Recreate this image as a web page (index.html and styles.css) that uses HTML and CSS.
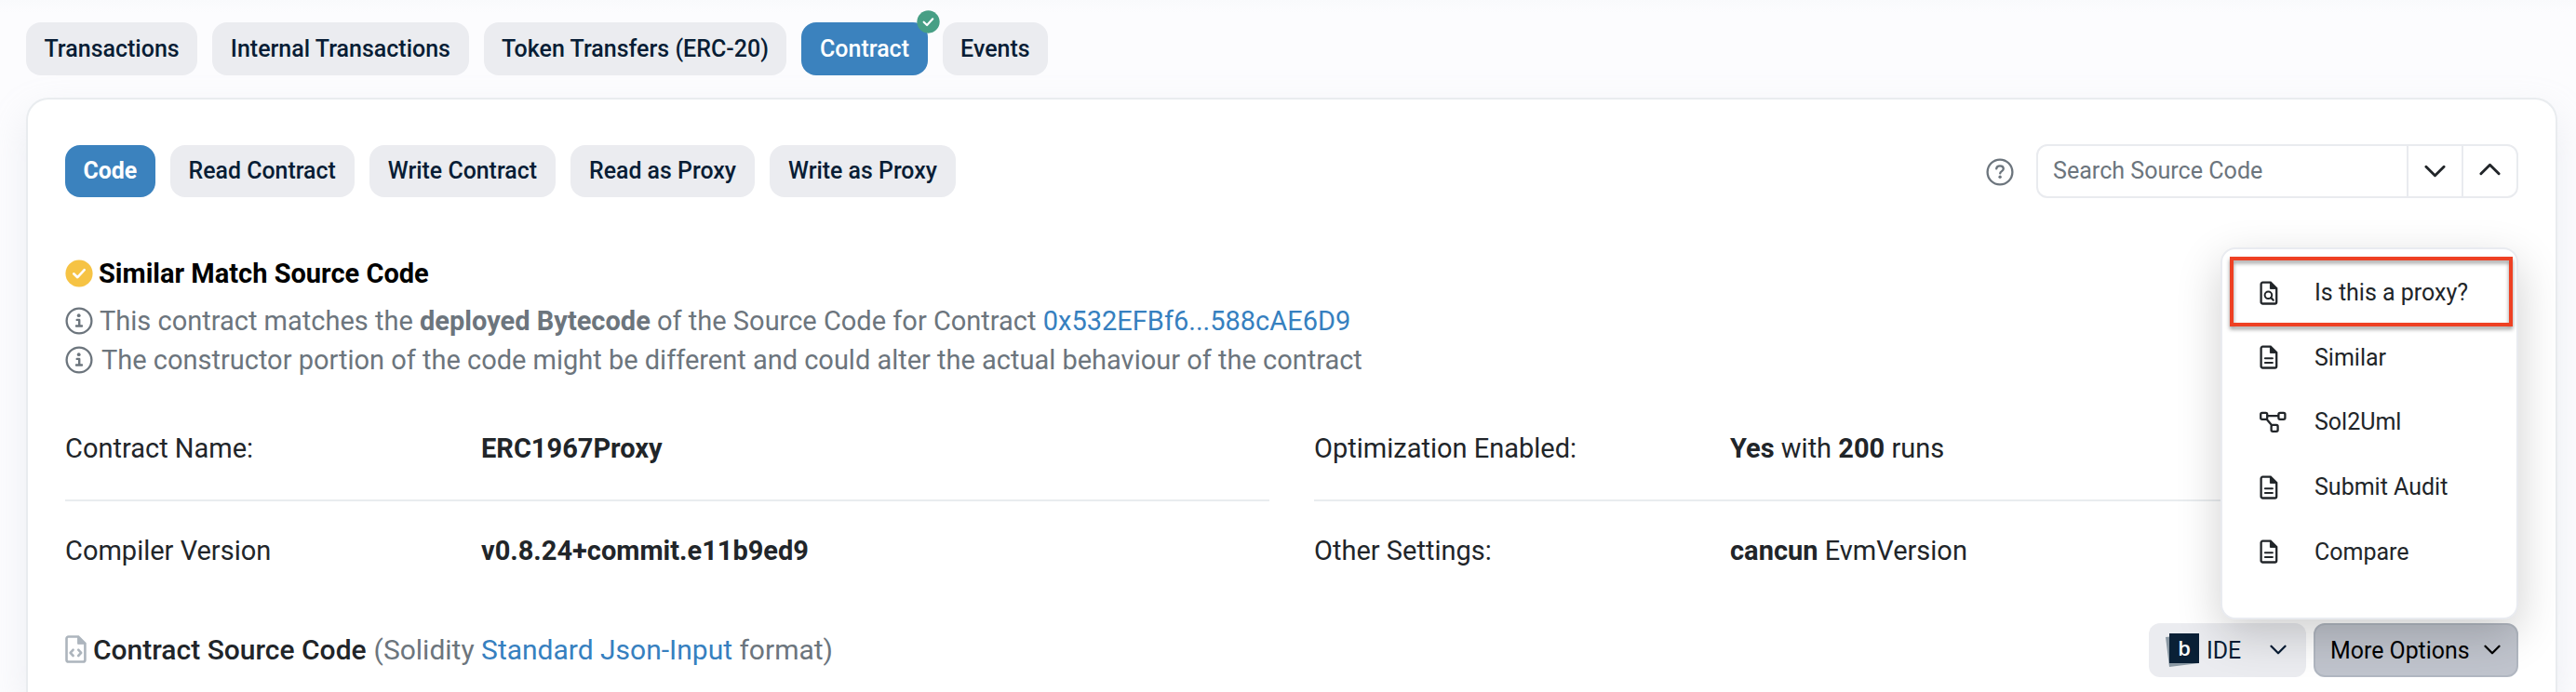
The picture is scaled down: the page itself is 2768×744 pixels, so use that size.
FILE: index.html
```html
<!DOCTYPE html>
<html lang="en">
<head>
<meta charset="utf-8">
<title>Contract</title>
<link rel="stylesheet" href="styles.css">
</head>
<body>
<svg class="defs" width="0" height="0">
  <symbol id="check" viewBox="0 0 30 30"><circle cx="15" cy="15" r="14.6" fill="currentColor"/><path d="M9.2 15.3l4.1 3.9 7.4-8" fill="none" stroke="#fff" stroke-width="2.6" stroke-linecap="round" stroke-linejoin="round"/></symbol>
  <symbol id="info" viewBox="0 0 30 30"><circle cx="15" cy="15" r="13.4" fill="none" stroke="currentColor" stroke-width="2.3"/><circle cx="14.7" cy="9.2" r="1.9" fill="currentColor"/><path d="M12.7 13.9h2.5v6.4M12 20.5h6" fill="none" stroke="currentColor" stroke-width="2.4" stroke-linecap="round" stroke-linejoin="round"/></symbol>
  <symbol id="down" viewBox="0 0 24 14"><path d="M2 2l10 10L22 2" fill="none" stroke="currentColor" stroke-width="3" stroke-linecap="round" stroke-linejoin="round"/></symbol>
  <symbol id="file" viewBox="0 0 20 26"><path d="M3.4 1.7h8.4l6.4 6.4v14.6a1.8 1.8 0 0 1-1.8 1.8H3.4a1.8 1.8 0 0 1-1.8-1.8V3.5a1.8 1.8 0 0 1 1.8-1.8z" fill="none" stroke="currentColor" stroke-width="2.3"/><path d="M11.4 1.5v6.9h6.9z" fill="currentColor" stroke="currentColor" stroke-linejoin="round"/></symbol>
</svg>

<nav class="tabs">
  <a class="tab">Transactions</a>
  <a class="tab">Internal Transactions</a>
  <a class="tab">Token Transfers (ERC-20)</a>
  <a class="tab active">Contract<svg class="badge"><use href="#check"/></svg></a>
  <a class="tab">Events</a>
</nav>

<main class="card">
  <div class="toolbar">
    <div class="subtabs">
      <a class="tab active">Code</a>
      <a class="tab">Read Contract</a>
      <a class="tab">Write Contract</a>
      <a class="tab">Read as Proxy</a>
      <a class="tab">Write as Proxy</a>
    </div>
    <div class="search-area">
      <svg class="help" viewBox="0 0 30 30" fill="none" stroke="currentColor" stroke-linecap="round" stroke-linejoin="round"><circle cx="15" cy="15" r="13.4" stroke-width="2.3"/><path d="M11.2 11.3c.2-1.8 1.5-2.9 3.8-2.9 2.2 0 3.8 1.2 3.8 3.1 0 2.4-3.6 2.7-3.6 4.9" stroke-width="2.3"/><circle cx="15.1" cy="20.3" r="1.7" fill="currentColor" stroke="none"/></svg>
      <div class="search">
        <span class="field">Search Source Code</span>
        <span class="step"><svg><use href="#down"/></svg></span>
        <span class="step up"><svg><use href="#down"/></svg></span>
      </div>
    </div>
  </div>

  <section class="match">
    <h2><svg class="mark yellow"><use href="#check"/></svg>Similar Match Source Code</h2>
    <p><svg class="mark"><use href="#info"/></svg><span>This contract matches the <b>deployed Bytecode</b> of the Source Code for Contract <a>0x532EFBf6...588cAE6D9</a></span></p>
    <p class="second"><svg class="mark"><use href="#info"/></svg><span>The constructor portion of the code might be different and could alter the actual behaviour of the contract</span></p>
  </section>

  <section class="details">
    <div class="row ruled"><span class="label">Contract Name:</span><span><b>ERC1967Proxy</b></span></div>
    <div class="row ruled"><span class="label">Optimization Enabled:</span><span><b>Yes</b> with <b>200</b> runs</span></div>
    <div class="row"><span class="label">Compiler Version</span><span><b>v0.8.24+commit.e11b9ed9</b></span></div>
    <div class="row"><span class="label">Other Settings:</span><span><b>cancun</b> EvmVersion</span></div>
  </section>

  <section class="source">
    <div class="source-title">
      <svg class="code-file" viewBox="0 0 23 30"><path d="M3.6 1.5h10.6l7.2 7.2v17.7a2.1 2.1 0 0 1-2.1 2.1H3.6a2.1 2.1 0 0 1-2.1-2.1V3.6a2.1 2.1 0 0 1 2.1-2.1z" fill="none" stroke="currentColor" stroke-width="2.6"/><path d="M13.6 1.3v8h8z" fill="currentColor" stroke="currentColor" stroke-linejoin="round"/><path d="M8.6 15.6l-3 3.2 3 3.2M14.2 15.6l3 3.2-3 3.2" fill="none" stroke="currentColor" stroke-width="2.6" stroke-linecap="round" stroke-linejoin="round"/></svg>
      <span class="name">Contract Source Code</span>
      <span class="format">(Solidity <a>Standard Json-Input</a> format)</span>
    </div>
    <div class="actions">
      <div class="btn ide">
        <span class="logo"><span class="logo-face">b</span></span>
        <span class="ide-text">IDE</span>
        <svg class="chev"><use href="#down"/></svg>
      </div>
      <div class="more">
        <div class="btn dark">More Options<svg class="chev"><use href="#down"/></svg></div>
        <div class="menu">
          <div class="item highlight"><svg class="ic" viewBox="0 0 20 26"><use href="#file"/><circle cx="9.4" cy="15.3" r="3.8" fill="none" stroke="currentColor" stroke-width="2"/><path d="M12.2 18l2.6 2.7" stroke="currentColor" stroke-width="2.2" stroke-linecap="round"/></svg>Is this a proxy?</div>
          <div class="item"><svg class="ic" viewBox="0 0 20 26"><use href="#file"/><path d="M5.9 14.3h8M5.9 19.1h8" stroke="currentColor" stroke-width="2" stroke-linecap="round"/></svg>Similar</div>
          <div class="item"><svg class="ic wide" viewBox="0 0 29 24" fill="none" stroke="currentColor" stroke-width="2.3"><rect x="1.2" y="1.8" width="7" height="7" rx="1.6"/><rect x="20.4" y="1.8" width="7" height="7" rx="1.6"/><rect x="12.6" y="14.8" width="7" height="7" rx="1.6"/><path d="M8.2 5.2h12.2M7.4 8.6l6 7"/></svg>Sol2Uml</div>
          <div class="item"><svg class="ic" viewBox="0 0 20 26"><use href="#file"/><path d="M5.9 14.3h8M5.9 19.1h8" stroke="currentColor" stroke-width="2" stroke-linecap="round"/></svg>Submit Audit</div>
          <div class="item"><svg class="ic" viewBox="0 0 20 26"><use href="#file"/><path d="M5.9 14.3h8M5.9 19.1h8" stroke="currentColor" stroke-width="2" stroke-linecap="round"/></svg>Compare</div>
        </div>
      </div>
    </div>
  </section>
</main>
</body>
</html>
```
FILE: styles.css
```css
* { box-sizing: border-box; }
html, body { height: 744px; overflow: hidden; }
body {
  margin: 0;
  padding: 24px 20px 0 28px;
  background: linear-gradient(#f9fafc 0, #fcfcfe 14px, #fcfcfe 100%);
  color: #212529;
  font-family: Roboto, "Liberation Sans", sans-serif;
  font-size: 29px;
}
svg { display: block; flex: none; }
.defs { position: absolute; }
b { font-weight: 700; }
a { color: #3680bf; }

.tabs, .subtabs { display: flex; gap: 16px; }
.tab {
  position: relative;
  height: 57px;
  padding: 0 19.6px 0 19.5px;
  border-radius: 16px;
  background: #ebecf0;
  color: #081d35;
  font-size: 25px;
  font-weight: 500;
  line-height: 57px;
  white-space: nowrap;
}
.subtabs .tab { height: 56px; padding: 0 20px; font-size: 24.9px; line-height: 56px; }
.tab.active { background: #3b82be; color: #fff; }
.subtabs .tab.active { padding: 0 19.4px; font-weight: 700; }
.badge { position: absolute; top: -13px; right: -13px; width: 25px; height: 25px; color: #479f85; }

.card {
  width: 2720px;
  height: 639px;
  margin-top: 24px;
  padding: 48px 40px 0;
  border: 2px solid #e9ecef;
  border-bottom: 0;
  border-radius: 24px 24px 0 0;
  background: #fff;
  box-shadow: 0 16px 38px rgba(189, 197, 209, .25);
}
.toolbar { display: flex; justify-content: space-between; align-items: center; height: 58px; }
.search-area { display: flex; align-items: center; }
.help { width: 30px; height: 30px; margin: 2px 24px 0 0; color: #6c757d; }
.search {
  display: flex;
  width: 518px;
  height: 58px;
  border: 2px solid #e9ebef;
  border-radius: 12px;
  line-height: 54px;
}
.field { flex: 1; padding-left: 16px; color: #6c757d; font-size: 25.1px; }
.step { display: flex; align-items: center; justify-content: center; width: 59px; border-left: 2px solid #e9ebef; }
.step svg { width: 23px; height: 14px; }
.step.up svg { transform: rotate(180deg); margin-bottom: 5px; }

.match { margin-top: 59px; color: #6c757d; }
.match h2, .match p { display: flex; align-items: center; margin: 0; height: 42px; white-space: nowrap; }
.match h2 { height: 44px; margin-bottom: 8px; color: #000; font-size: 29px; font-weight: 700; }
.mark { width: 30px; height: 30px; margin-right: 7px; }
h2 .mark { margin-right: 6px; }
.second .mark { margin-right: 9px; }
.second { letter-spacing: -.01px; }
.yellow { color: #f6c344; }

.details { display: grid; grid-template-columns: 1fr 1fr; column-gap: 48px; margin-top: 19px; }
.row { display: flex; align-items: center; height: 106px; }
.row.ruled { height: 112px; border-bottom: 2px solid #e9ecef; }
.label { width: 447px; }

.source { display: flex; justify-content: space-between; align-items: center; height: 58px; margin-top: 25px; }
.source-title { display: flex; align-items: center; margin-top: -2px; white-space: nowrap; }
.code-file { width: 23px; height: 30px; margin-right: 7px; color: #adb5bd; }
.name { margin-right: 8px; font-weight: 500; font-size: 30px; }
.format { color: #6c757d; font-size: 30px; }
.actions { display: flex; gap: 8px; }
.btn {
  display: flex;
  align-items: center;
  height: 58px;
  border-radius: 12px;
  background: #ebecf0;
  color: #081d35;
  font-size: 24.9px;
}
.ide { width: 169px; padding-left: 18px; }
.btn .chev { width: 18px; height: 11px; margin-top: -2px; }
.ide .chev { margin-left: 31px; }
.logo { display: flex; justify-content: flex-end; position: relative; width: 36px; height: 36px; margin-right: 8px; }
.logo::before { content: ""; position: absolute; inset: 0; background: #8a98a3; clip-path: polygon(0 4px, 10px 3px, 100% 32px, 4px 100%); }
.logo-face {
  position: relative;
  width: 32px;
  height: 32px;
  background: #0a2036;
  color: #fff;
  font: 600 22px/31px "Open Sans", sans-serif;
  text-align: center;
}
.more { position: relative; }
.dark { width: 220px; padding-left: 16px; border: 2px solid #b1b7c1; background: #c0c4cd; color: #000; }
.dark .chev { margin-left: 15px; }

.menu {
  position: absolute;
  right: 0;
  bottom: 62px;
  width: 320px;
  height: 400px;
  padding: 12px 4px 0 8px;
  border: 2px solid #e9ebf0;
  border-radius: 16px;
  background: #fff;
  box-shadow: 0 16px 48px rgba(0, 0, 0, .19);
  font-size: 25px;
}
.item { position: relative; display: flex; align-items: center; height: 69.6px; padding-left: 32px; }
.ic { width: 20px; height: 26px; margin-right: 39px; }
.ic.wide { width: 29px; height: 24px; margin-right: 30px; }
.highlight::before {
  content: "";
  position: absolute;
  inset: -4px 0 -1px 0;
  border: 4px solid #ee4023;
  filter: drop-shadow(0 3px 2px rgba(0, 0, 0, .4));
}
```
